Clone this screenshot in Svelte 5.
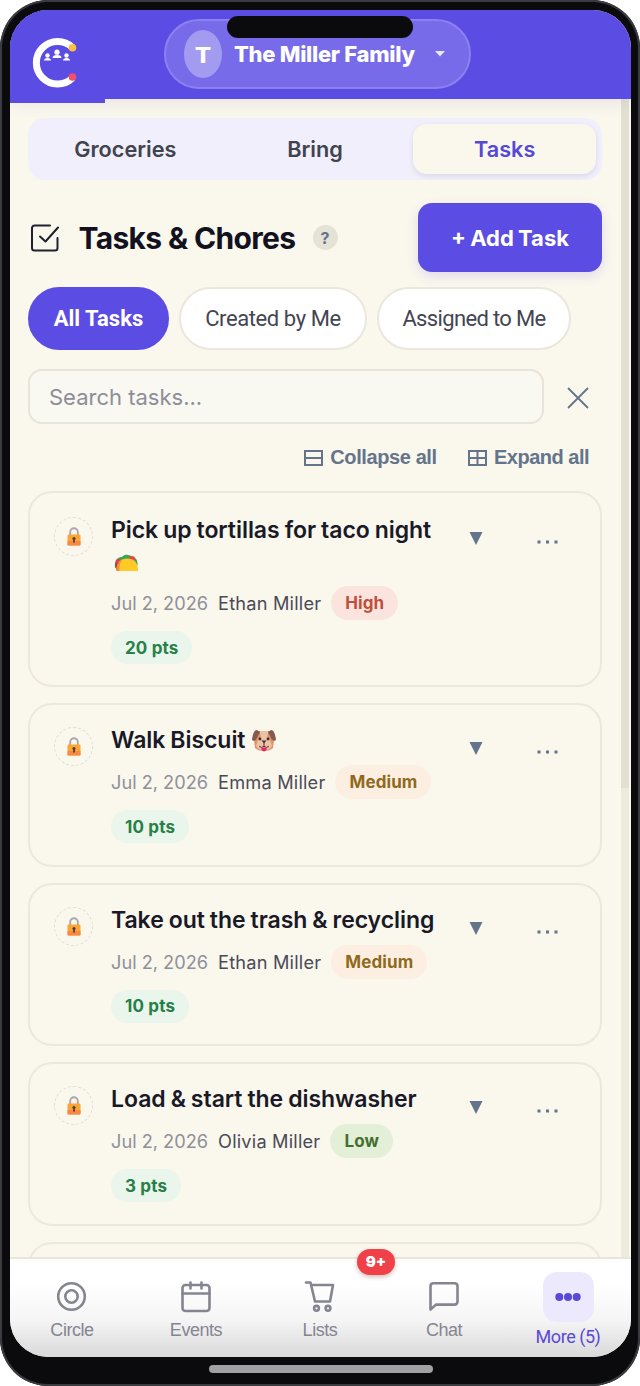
<script>
  let tabs = ['Groceries', 'Bring', 'Tasks'];
  let activeTab = 'Tasks';

  let filters = [
    { id: 'all', label: 'All Tasks' },
    { id: 'created', label: 'Created by Me' },
    { id: 'assigned', label: 'Assigned to Me' }
  ];
  let activeFilter = 'all';
  let search = '';

  let tasks = [
    { id: 1, title: 'Pick up tortillas for taco night', emoji: 'taco', date: 'Jul 2, 2026', who: 'Ethan Miller', priority: 'High', points: 20 },
    { id: 2, title: 'Walk Biscuit', emoji: 'dog', date: 'Jul 2, 2026', who: 'Emma Miller', priority: 'Medium', points: 10 },
    { id: 3, title: 'Take out the trash & recycling', date: 'Jul 2, 2026', who: 'Ethan Miller', priority: 'Medium', points: 10 },
    { id: 4, title: 'Load & start the dishwasher', date: 'Jul 2, 2026', who: 'Olivia Miller', priority: 'Low', points: 3 }
  ];

  let nav = ['Circle', 'Events', 'Lists', 'Chat', 'More (5)'];
</script>

<div class="phone">
  <div class="notch"></div>
  <div class="screen">
    <header>
      <div class="logo">
        <svg width="50" height="52" viewBox="0 0 50 52">
          <path d="M41.5 10.5A21.3 21.3 0 1 0 41.5 41" fill="none" stroke="#fff" stroke-width="7" />
          <circle cx="41.5" cy="10.8" r="3.8" fill="#fbc13c" />
          <circle cx="41.5" cy="40" r="3.8" fill="#f0506a" />
          <g fill="#fff">
            <circle cx="16.5" cy="18.500" r="2.200" /><path d="M13 23.500q0-2.500 3.500-2.500t3.500 2.500z" />
            <circle cx="26" cy="15.200" r="2.600" /><path d="M21.500 21q0-3 4.500-3t4.500 3z" />
            <circle cx="35.500" cy="18.500" r="2.200" /><path d="M32 23.500q0-2.500 3.500-2.500t3.500 2.500z" />
          </g>
        </svg>
      </div>
      <button class="family">
        <span class="avatar">T</span>
        <span class="family-name">The Miller Family</span>
        <svg width="10" height="6" viewBox="0 0 10 6"><path d="M0 0h10L5 5.500z" fill="#e9e6ff" /></svg>
      </button>
    </header>

    <main>
      <div class="content">
        <div class="tabs">
          {#each tabs as tab}
            <button class="tab" class:active={tab === activeTab} on:click={() => (activeTab = tab)}>{tab}</button>
          {/each}
        </div>

        <div class="heading">
          <svg class="check" width="30" height="30" viewBox="0 0 30 30" fill="none" stroke="#20202e" stroke-width="2" stroke-linecap="round" stroke-linejoin="round">
            <path d="M20 2.500H4.500A2.500 2.500 0 0 0 2 5v20A2.500 2.500 0 0 0 4.500 27.500h20.500a2.500 2.500 0 0 0 2.500-2.500V15" />
            <path d="M10 13.500l5.500 5L28 4.500" />
          </svg>
          <h1>Tasks &amp; Chores</h1>
          <span class="help">?</span>
          <button class="add">+ Add Task</button>
        </div>

        <div class="filters">
          {#each filters as filter}
            <button class="filter {filter.id}" class:active={filter.id === activeFilter} on:click={() => (activeFilter = filter.id)}>{filter.label}</button>
          {/each}
        </div>

        <div class="search">
          <input type="text" bind:value={search} placeholder="Search tasks..." />
          <button class="clear" aria-label="Clear" on:click={() => (search = '')}>
            <svg width="22" height="22" viewBox="0 0 22 22" stroke="#64748b" stroke-width="1.800"><path d="M1 1l20 20M21 1L1 21" /></svg>
          </button>
        </div>

        <div class="bulk">
          <button>
            <svg width="19" height="16" viewBox="0 0 19 16" fill="none" stroke="#64748b" stroke-width="2"><path d="M1 1h17v14H1zM1 8h17" /></svg>
            <span class="collapse">Collapse all</span>
          </button>
          <button>
            <svg width="19" height="16" viewBox="0 0 19 16" fill="none" stroke="#64748b" stroke-width="2"><path d="M1 1h17v14H1zM1 8h17M9.500 1v14" /></svg>
            <span class="expand">Expand all</span>
          </button>
        </div>

        <div class="list">
          {#each tasks as task (task.id)}
            <article class="card" class:tall={task.emoji === 'taco'}>
              <span class="lock">
                <svg width="14" height="19" viewBox="0 0 14 19">
                  <path d="M3.200 9V5a3.800 3.800 0 0 1 7.600 0v4" fill="none" stroke="#aaa5ae" stroke-width="1.900" />
                  <rect x="0.500" y="7.500" width="13" height="11" rx="1.200" fill="#fba634" />
                  <path d="M.5 14h13v3.500a1 1 0 0 1-1 1h-11a1 1 0 0 1-1-1z" fill="#f78945" />
                  <circle cx="7" cy="11.500" r="1.600" fill="#553b3d" />
                  <path d="M6.300 11.500h1.400l.3 4H6z" fill="#553b3d" />
                </svg>
              </span>
              <div class="info">
                <h2>
                  <span>{task.title}</span>
                  {#if task.emoji === 'taco'}
                    <svg class="taco" width="25" height="18" viewBox="0 0 25 18">
                      <path d="M1 14C0 6 4 3 8 3c3-4 9-2 10 0 4 0 6 4 5.500 8l-4 2z" fill="#36a852" />
                      <circle cx="4.500" cy="8" r="3" fill="#e33c55" />
                      <circle cx="18" cy="5" r="3" fill="#ed4054" />
                      <path d="M1.500 9.500l3-1 1.500 7.500H2z" fill="#a1304d" />
                      <path d="M2.500 17C2 8 7 4.500 13.500 4.500S24.500 9 24 17z" fill="#ffc928" />
                      <path d="M2.500 17C2 9 6 6 9 5c-3 3-4 7-3.500 12z" fill="#f78d32" />
                    </svg>
                  {:else if task.emoji === 'dog'}
                    <svg class="dog" width="24" height="22" viewBox="0 0 24 22">
                      <path d="M4 1h16l2 9-1 8q-3 3-9 3t-9-3L2 10z" fill="#dc9468" />
                      <path d="M8 1h8l-1 9h3l2 6q-2 4-8 4t-8-4l2-6h3z" fill="#edc4a3" />
                      <path d="M5 0C2 0 1 4 0 9c0 3 4 2 5-1l3-6zM19 0c3 0 4 4 5 9 0 3-4 2-5-1l-3-6z" fill="#855a50" />
                      <circle cx="8" cy="9" r="1.400" fill="#3b2d37" /><circle cx="16" cy="9" r="1.400" fill="#3b2d37" />
                      <path d="M9.500 10.500h5L12 13.500z" fill="#3b2d37" />
                      <path d="M12 13v4M7 16.500q3 2 5-.500 2 2.500 5 .5" fill="none" stroke="#5b3a3d" />
                      <path d="M9.500 17.500h5v2q-2.500 4-5 0z" fill="#e02670" />
                    </svg>
                  {/if}
                </h2>
                <div class="meta">
                  <span class="date">{task.date}</span>
                  <span class="who">{task.who}</span>
                  <span class="pill {task.priority.toLowerCase()}">{task.priority}</span>
                  <span class="pill pts">{task.points} pts</span>
                </div>
              </div>
              <button class="toggle" aria-label="Expand">
                <svg width="14" height="13" viewBox="0 0 14 13"><path d="M.5 0h13L7 13z" fill="#64748b" /></svg>
              </button>
              <button class="menu" aria-label="Menu">
                <svg width="22" height="4" viewBox="0 0 22 4" fill="#64748b"><path d="M.5.5h3v3h-3zM9 .5h3v3H9zM17.500.5h3v3h-3z" /></svg>
              </button>
            </article>
          {/each}
          <article class="card"></article>
        </div>
      </div>
      <div class="scrollbar"><div class="thumb"></div></div>
    </main>

    <nav>
      {#each nav as item, i}
        <button class="nav-item" class:current={i === 4}>
          <span class="nav-icon">
            <svg width="32" height="32" viewBox="0 0 32 32" fill="none" stroke="currentColor" stroke-width="2.600" stroke-linecap="round" stroke-linejoin="round">
              {#if i === 0}
                <circle cx="15.500" cy="15.500" r="13.300" /><circle cx="15.500" cy="15.500" r="6.200" />
              {:else if i === 1}
                <rect x="2.500" y="4" width="27" height="26" rx="3" /><path d="M10.500 1.500v6M21.500 1.500v6M2.500 12.500h27" />
              {:else if i === 2}
                <path d="M2 1.500h4.500L11 20.500h15l3-16.500H7.200" /><circle cx="12.500" cy="27.300" r="2.400" /><circle cx="24" cy="27.300" r="2.400" />
              {:else if i === 3}
                <path d="M2.500 28.500V5A2.800 2.800 0 0 1 5.300 2.200h21.400a2.800 2.800 0 0 1 2.800 2.800v15.800a2.800 2.800 0 0 1-2.800 2.800H8z" />
              {:else}
                <g fill="currentColor" stroke="none"><circle cx="7.300" cy="16" r="4" /><circle cx="16" cy="16" r="4" /><circle cx="24.700" cy="16" r="4" /></g>
              {/if}
            </svg>
            {#if i === 2}<span class="badge">9+</span>{/if}
          </span>
          <span class="nav-label">{item}</span>
        </button>
      {/each}
    </nav>
  </div>
  <div class="home-bar"></div>
</div>

<style>
  :global(body) {
    background: #fff;
  }

  * {
    box-sizing: border-box;
  }

  button {
    border: none;
    background: none;
    padding: 0;
    font-family: inherit;
  }

  svg {
    display: block;
    flex: none;
  }

  .phone {
    position: relative;
    width: 640px;
    height: 1386px;
    padding: 10px 9px 0 10px;
    border-radius: 48px;
    background: #0b0b0d;
    box-shadow: inset 0 0 0 2px #3a3b40;
    font-family: Inter, 'Liberation Sans', sans-serif;
    overflow: hidden;
  }

  .notch {
    position: absolute;
    z-index: 3;
    left: 227px;
    top: 16px;
    width: 186px;
    height: 22px;
    border-radius: 11px;
    background: #0b0b0d;
  }

  .screen {
    display: flex;
    flex-direction: column;
    height: 1347px;
    border-radius: 38px;
    overflow: hidden;
    background: #faf7ed;
  }

  .home-bar {
    width: 224px;
    height: 8px;
    margin: 8px auto 0;
    border-radius: 4px;
    background: #a1a1a5;
  }

  header {
    position: relative;
    z-index: 2;
    display: flex;
    align-items: flex-start;
    flex: none;
    height: 89px;
    background: #5b4de3;
    box-shadow: 0 2px 16px rgba(91, 77, 170, 0.14);
  }

  .logo {
    width: 95px;
    height: 93px;
    padding: 27px 0 0 21px;
    background: #5b4de3;
  }

  .family {
    display: flex;
    align-items: center;
    width: 307px;
    height: 70px;
    margin: 9px 0 0 59px;
    padding-left: 18px;
    border: 2px solid #8b81f0;
    border-radius: 35px;
    background: #776be9;
    color: #fff;
  }

  .avatar {
    display: grid;
    place-items: center;
    width: 38px;
    height: 48px;
    padding-top: 3px;
    border-radius: 50%;
    background: #a39bf0;
    font: 700 22px 'DejaVu Sans', sans-serif;
  }

  .family-name {
    width: 183px;
    margin: 0 18px 0 12px;
    font: 800 22px Inter, sans-serif;
    letter-spacing: -0.300px;
    white-space: nowrap;
    text-align: left;
  }

  main {
    display: flex;
    flex: 1;
    min-height: 0;
    overflow: hidden;
  }

  .content {
    width: 611px;
    padding: 19px 19px 0 18px;
  }

  .scrollbar {
    width: 8px;
    background: #edebdb;
  }

  .thumb {
    height: 689px;
    background: #e3e0d3;
  }

  .tabs {
    display: grid;
    grid-template-columns: repeat(3, 1fr);
    column-gap: 7px;
    height: 62px;
    padding: 6px;
    border-radius: 17px;
    background: #f1effb;
  }

  .tab {
    border-radius: 14px;
    color: #41434f;
    font-size: 21.700px;
    font-weight: 600;
  }

  .tab.active {
    background: #faf7ed;
    color: #5548d9;
    box-shadow: 0 2px 5px rgba(60, 50, 90, 0.12);
  }

  .heading {
    display: flex;
    align-items: center;
    height: 69px;
    margin-top: 23px;
  }

  .check {
    margin-left: 1.500px;
  }

  h1 {
    width: 217px;
    margin: 0 17px 0 19px;
    color: #12121f;
    font-size: 30px;
    font-weight: 700;
    letter-spacing: -0.650px;
    white-space: nowrap;
  }

  .help {
    display: grid;
    place-items: center;
    width: 25px;
    height: 25px;
    border-radius: 50%;
    background: #e5e2d6;
    color: #64748b;
    font-size: 16px;
    font-weight: 700;
  }

  .add {
    width: 184px;
    height: 69px;
    margin-left: auto;
    border-radius: 14px;
    background: #5b4de3;
    box-shadow: 0 4px 12px rgba(91, 77, 227, 0.16);
    color: #fff;
    font: 700 22px Inter, sans-serif;
    word-spacing: -1px;
    white-space: nowrap;
  }

  .filters {
    display: flex;
    gap: 10px;
    height: 63px;
    margin-top: 15px;
  }

  .filter {
    width: 188px;
    border: 2px solid #ece7dc;
    border-radius: 32px;
    background: #fff;
    color: #444552;
    font: 400 22px Roboto, sans-serif;
    letter-spacing: -0.400px;
    white-space: nowrap;
  }

  .filter.all {
    width: 141px;
  }

  .filter.assigned {
    width: 194px;
    letter-spacing: -0.650px;
  }

  .filter.active {
    border-color: #5b4de3;
    background: #5b4de3;
    color: #fff;
    font-weight: 700;
    letter-spacing: 0;
  }

  .search {
    display: flex;
    align-items: center;
    height: 55px;
    margin-top: 19px;
  }

  input {
    width: 516px;
    height: 55px;
    padding: 0 19px;
    border: 2px solid #e8e4d9;
    border-radius: 14px;
    outline: none;
    background: #f9f8f1;
    color: #20202e;
    font: 400 22px Inter, sans-serif;
  }

  input::placeholder {
    color: #8d8e99;
    opacity: 1;
  }

  .clear {
    margin: 2px 0 0 23px;
  }

  .bulk {
    display: flex;
    justify-content: flex-end;
    gap: 31px;
    height: 32px;
    margin-top: 17px;
    padding-right: 13px;
  }

  .bulk button {
    display: flex;
    align-items: center;
    gap: 7px;
    color: #64748b;
    font: 700 20px 'Liberation Sans', sans-serif;
    white-space: nowrap;
  }

  .bulk svg {
    margin-top: 2px;
  }

  .collapse {
    width: 107px;
    letter-spacing: -0.400px;
  }

  .expand {
    width: 95px;
    letter-spacing: -0.500px;
  }

  .list {
    display: flex;
    flex-direction: column;
    gap: 16px;
    margin-top: 18px;
  }

  .card {
    display: flex;
    align-items: flex-start;
    flex: none;
    min-height: 163.500px;
    padding: 19px 24px 21px;
    border: 2px solid #ece8dd;
    border-radius: 24px;
    background: #faf7ed;
  }

  .card.tall {
    padding-top: 21px;
  }

  .lock {
    display: grid;
    place-items: center;
    width: 39px;
    height: 39px;
    margin-top: 3px;
    border: 1.500px dashed #e3ddd1;
    border-radius: 50%;
  }

  .info {
    width: 330px;
    margin-left: 18px;
  }

  h2 {
    display: flex;
    flex-wrap: wrap;
    align-items: center;
    margin: 0 0 8px;
    color: #191927;
    font-size: 23px;
    font-weight: 600;
    line-height: 33px;
    letter-spacing: -0.050px;
    word-spacing: -0.700px;
    white-space: nowrap;
  }

  .tall h2 {
    margin-bottom: 6px;
  }

  .taco {
    margin: 7px 30px 8px 3px;
  }

  .dog {
    margin-left: 7px;
  }

  .meta {
    display: flex;
    flex-wrap: wrap;
    align-items: center;
    gap: 11px 10px;
    font-size: 18.200px;
    white-space: nowrap;
  }

  .date {
    color: #8f909a;
  }

  .who {
    color: #4a4b58;
    letter-spacing: 0.200px;
  }

  .pill {
    display: flex;
    align-items: center;
    height: 34px;
    padding: 0 14px;
    border-radius: 17px;
    font-size: 17px;
    font-weight: 700;
    letter-spacing: 0.100px;
  }

  .high {
    background: #fbe4de;
    color: #bd4f3c;
  }

  .medium {
    background: #fcefe2;
    color: #8f6a1d;
  }

  .low {
    background: #e4efd7;
    color: #44702f;
  }

  .pts {
    height: 33px;
    background: #eaf5eb;
    color: #278047;
    font-weight: 650;
    letter-spacing: 0.150px;
  }

  .toggle {
    margin: 18px 0 0 28px;
  }

  .menu {
    margin: 26px 0 0 53.500px;
  }

  nav {
    position: relative;
    z-index: 1;
    display: grid;
    grid-template-columns: repeat(5, 124px);
    flex: none;
    height: 100px;
    border-top: 2px solid #ece4d8;
    background: linear-gradient(#fff 25%, #f5f5f6 62%, #d9d9da);
  }

  .nav-item {
    display: flex;
    flex-direction: column;
    align-items: center;
    padding-top: 22px;
    color: #858592;
  }

  .nav-icon {
    position: relative;
  }

  .nav-label {
    margin-top: 6px;
    font: 400 18px 'Liberation Sans', sans-serif;
    line-height: 22px;
    letter-spacing: -0.450px;
    white-space: nowrap;
  }

  .current {
    padding-top: 13px;
    color: #5a49d8;
  }

  .current .nav-icon {
    display: grid;
    place-items: center;
    width: 51px;
    height: 50px;
    border-radius: 14px;
    background: #ebe9fb;
  }

  .current .nav-label {
    margin-top: 4px;
    font-family: Roboto, sans-serif;
  }

  .badge {
    position: absolute;
    left: 53px;
    top: -32px;
    width: 38px;
    height: 26px;
    border-radius: 13px;
    background: #ef4147;
    box-shadow: 0 2px 4px rgba(120, 30, 30, 0.3);
    color: #fff;
    font: 900 15px/25px Inter, sans-serif;
    text-align: center;
  }
</style>
